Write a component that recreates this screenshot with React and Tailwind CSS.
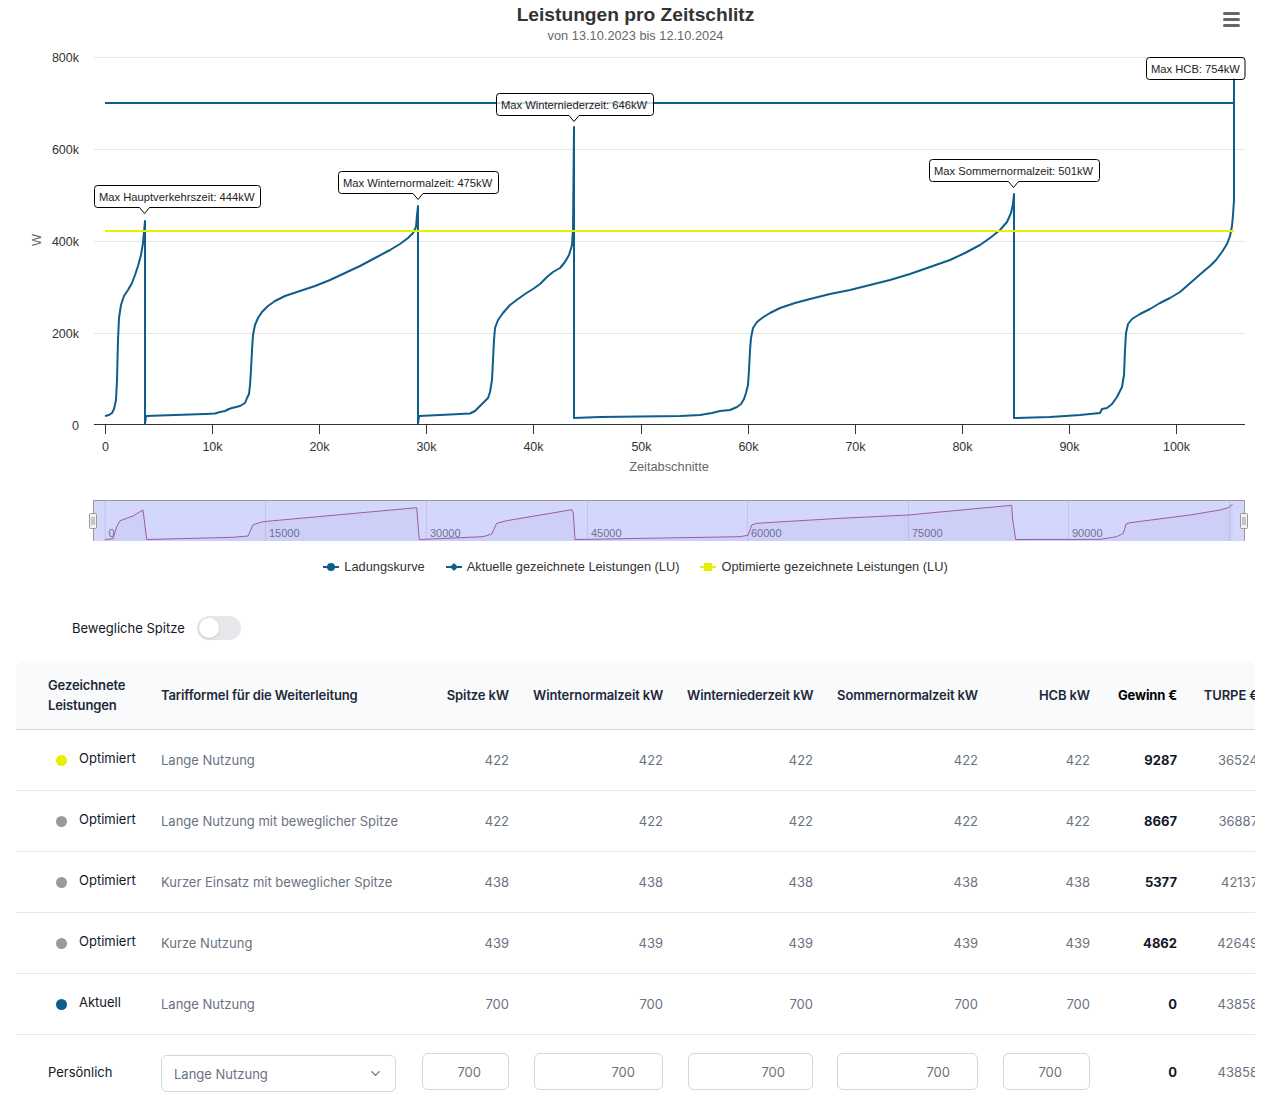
import React from "react";
import { ChevronDown } from "lucide-react";

const BLUE = "#0f5d8a";
const YELLOW = "#e8f000";
const GRAY = "#9a9a9a";

const pts = (arr) => arr.map((p) => p.join(",")).join(" ");

// Ladungskurve, page coordinates
const curve = [
  [105, 416], [109, 415], [112, 413], [114, 409], [116, 400], [117, 380], [118, 340], [119, 318], [121, 305], [124, 296], [128, 290], [132, 283], [135, 275], [138, 266], [141, 255], [143, 243], [144, 232], [145, 221],
  [145, 424], [146, 416], [160, 415.5], [175, 415], [190, 414.5], [205, 414], [215, 413.5], [220, 412], [225, 411], [229, 409], [232, 408], [240, 406], [245, 403], [247, 398], [249, 394], [250, 385], [251, 370], [252, 350], [253, 335], [255, 325], [258, 318], [262, 312], [268, 306], [275, 301], [285, 296], [300, 291], [315, 286], [330, 280], [345, 273], [360, 266], [375, 258], [390, 250], [400, 244], [408, 238], [413, 233], [416, 227], [417, 215], [418, 206],
  [418, 424], [419, 416], [440, 415], [460, 414], [470, 413.5], [475, 411], [480, 406], [484, 402], [488, 398], [490, 392], [492, 380], [493, 360], [494, 340], [495, 328], [498, 320], [503, 313], [510, 305], [518, 299], [525, 294], [533, 289], [540, 284], [547, 277], [553, 272], [560, 268], [565, 262], [569, 255], [572, 245], [573, 230], [574, 127],
  [574, 418], [600, 417], [640, 416.5], [680, 416], [700, 415], [712, 413], [720, 411], [730, 410], [737, 407], [741, 404], [744, 399], [746, 393], [748, 385], [749, 370], [750, 350], [751, 338], [753, 328], [757, 322], [762, 318], [770, 313], [780, 308], [795, 303], [810, 299], [830, 294], [850, 290], [870, 285], [890, 280], [910, 274], [930, 267], [950, 260], [965, 253], [980, 245], [990, 238], [1000, 230], [1007, 222], [1011, 213], [1013, 204], [1014, 194],
  [1014, 418], [1050, 417], [1080, 415], [1100, 413], [1102, 409], [1107, 408], [1112, 404], [1117, 397], [1122, 387], [1124, 375], [1125, 350], [1126, 333], [1128, 324], [1132, 319], [1140, 314], [1150, 309], [1160, 303], [1170, 298], [1180, 292], [1188, 285], [1196, 278], [1204, 271], [1210, 266], [1216, 260], [1222, 252], [1227, 244], [1230, 236], [1232, 226], [1233, 215], [1234, 200], [1234, 78],
];

// navigator series
const nav = [
  [105, 539.5], [113, 538.7], [116.7, 526.7], [120, 520.7], [133, 516], [143, 510], [146.7, 539.5],
  [233, 537.3], [248, 536], [253, 524.7], [263, 521.7], [416.7, 507.7], [419.3, 539.5],
  [483, 536.7], [491.7, 534], [496.7, 523.3], [506.7, 520.7], [570, 510], [571.7, 509.3], [573.3, 513], [575, 539.5],
  [740, 536.7], [748, 535.3], [751.7, 525], [756.7, 523.3], [840, 518.3], [908, 515], [1011.7, 505.3], [1012.7, 520], [1015.7, 539.5],
  [1100, 539.3], [1116.7, 536.7], [1123.3, 533.3], [1126, 524], [1130, 522.7], [1190, 515], [1220, 510], [1228.3, 507.7], [1232.7, 504],
];

const callout = (x1, y1, x2, y2, tx) => {
  const r = 3;
  if (tx == null) {
    return `M${x1 + r} ${y1} H${x2 - r} Q${x2} ${y1} ${x2} ${y1 + r} V${y2 - r} Q${x2} ${y2} ${x2 - r} ${y2} H${x1 + r} Q${x1} ${y2} ${x1} ${y2 - r} V${y1 + r} Q${x1} ${y1} ${x1 + r} ${y1} Z`;
  }
  return `M${x1 + r} ${y1} H${x2 - r} Q${x2} ${y1} ${x2} ${y1 + r} V${y2 - r} Q${x2} ${y2} ${x2 - r} ${y2} H${tx + 5} L${tx} ${y2 + 6} L${tx - 5} ${y2} H${x1 + r} Q${x1} ${y2} ${x1} ${y2 - r} V${y1 + r} Q${x1} ${y1} ${x1 + r} ${y1} Z`;
};

const annotations = [
  { x1: 94.5, y1: 185.5, x2: 260.5, y2: 207.5, tx: 144.5, text: "Max Hauptverkehrszeit: 444kW" },
  { x1: 338.5, y1: 171.5, x2: 498.5, y2: 193.5, tx: 418, text: "Max Winternormalzeit: 475kW" },
  { x1: 496.5, y1: 93.5, x2: 653.5, y2: 115.5, tx: 574, text: "Max Winterniederzeit: 646kW" },
  { x1: 929.5, y1: 159.5, x2: 1099.5, y2: 181.5, tx: 1013.5, text: "Max Sommernormalzeit: 501kW" },
  { x1: 1146.5, y1: 57.5, x2: 1245, y2: 79.5, tx: null, text: "Max HCB: 754kW" },
];

const yLabels = [
  { y: 57, t: "800k" },
  { y: 149, t: "600k" },
  { y: 241, t: "400k" },
  { y: 333, t: "200k" },
  { y: 425, t: "0" },
];

const xLabels = ["0", "10k", "20k", "30k", "40k", "50k", "60k", "70k", "80k", "90k", "100k"];
const navGrid = [105, 265.5, 426.5, 587.5, 747.5, 908.5, 1068.5, 1229.5];
const navLabels = ["0", "15000", "30000", "45000", "60000", "75000", "90000"];

function Chart() {
  return (
    <svg width="1271" height="506" viewBox="0 44 1271 506" className="block" style={{ fontFamily: "'Liberation Sans', Arial, sans-serif" }}>
      {/* grid */}
      {[57.5, 149.5, 241.5, 333.5].map((y) => (
        <line key={y} x1="94" x2="1245" y1={y} y2={y} stroke="#e6e6e6" strokeWidth="1" />
      ))}
      {yLabels.map((l) => (
        <text key={l.t} x="79" y={l.y + 4.5} textAnchor="end" fontSize="12.5" fill="#333">
          {l.t}
        </text>
      ))}
      <text x="41" y="240" fontSize="12.8" fill="#666" textAnchor="middle" transform="rotate(-90 41 240)">
        W
      </text>

      {/* x axis */}
      <line x1="94" x2="1245" y1="424.5" y2="424.5" stroke="#333" strokeWidth="1" />
      {xLabels.map((t, i) => {
        const x = Math.round(105 + i * 107.1) + 0.5;
        return (
          <g key={t}>
            <line x1={x} x2={x} y1="425" y2="434" stroke="#333" strokeWidth="1" />
            <text x={x} y="450.5" textAnchor="middle" fontSize="12.5" fill="#333">
              {t}
            </text>
          </g>
        );
      })}
      <text x="669" y="471" textAnchor="middle" fontSize="12.8" fill="#666">
        Zeitabschnitte
      </text>

      {/* series */}
      <polyline points={pts(curve)} fill="none" stroke={BLUE} strokeWidth="2" strokeLinejoin="round" />
      <line x1="105" x2="1234" y1="103" y2="103" stroke={BLUE} strokeWidth="2" />
      <line x1="105" x2="1234" y1="231" y2="231" stroke={YELLOW} strokeWidth="2" />

      {/* annotations */}
      {annotations.map((a) => (
        <g key={a.text}>
          <path d={callout(a.x1, a.y1, a.x2, a.y2, a.tx)} fill="rgba(255,255,255,0.75)" stroke="#000" strokeWidth="1" />
          <text x={a.x1 + 4.5} y={a.y1 + 15} fontSize="11.2" fill="#222">
            {a.text}
          </text>
        </g>
      ))}

      {/* navigator */}
      <rect x="93" y="500" width="1152" height="41" fill="#d3d7fb" />
      {navGrid.map((x) => (
        <line key={x} x1={x} x2={x} y1="500" y2="541" stroke="#c0c4ee" strokeWidth="1" />
      ))}
      {navLabels.map((t, i) => (
        <text key={t} x={navGrid[i] + 3.5} y="537" fontSize="11" fill="#6f7296">
          {t}
        </text>
      ))}
      <polygon points={pts([...nav, [1232.7, 541], [105, 541]])} fill="rgba(120,90,170,0.06)" />
      <polyline points={pts(nav)} fill="none" stroke="#a05aa8" strokeWidth="1" />
      <path d="M93.5 541 V500.5 H1244.5 V541" fill="none" stroke="#999" strokeWidth="1" />
      {[89.5, 1240.5].map((x) => (
        <g key={x}>
          <rect x={x} y="513.5" width="7" height="15" rx="1" fill="#f2f2f2" stroke="#999" strokeWidth="1" />
          <line x1={x + 2.5} x2={x + 2.5} y1="517" y2="525" stroke="#999" strokeWidth="1" />
          <line x1={x + 4.5} x2={x + 4.5} y1="517" y2="525" stroke="#999" strokeWidth="1" />
        </g>
      ))}
    </svg>
  );
}

function LegendItem({ type, color, label }) {
  return (
    <div className="flex items-center">
      <svg width="16" height="12" className="block">
        <line x1="0" x2="16" y1="6" y2="6" stroke={color} strokeWidth="2" />
        {type === "circle" && <circle cx="8" cy="6" r="4" fill={color} />}
        {type === "diamond" && <path d="M8 2 L12 6 L8 10 L4 6 Z" fill={color} />}
        {type === "square" && <rect x="4" y="2" width="8" height="8" fill={color} />}
      </svg>
      <span className="ml-[5px]">{label}</span>
    </div>
  );
}

const rows = [
  { dot: YELLOW, name: "Optimiert", tarif: "Lange Nutzung", v: 422, gewinn: 9287, turpe: 36524 },
  { dot: GRAY, name: "Optimiert", tarif: "Lange Nutzung mit beweglicher Spitze", v: 422, gewinn: 8667, turpe: 36887 },
  { dot: GRAY, name: "Optimiert", tarif: "Kurzer Einsatz mit beweglicher Spitze", v: 438, gewinn: 5377, turpe: 42137 },
  { dot: GRAY, name: "Optimiert", tarif: "Kurze Nutzung", v: 439, gewinn: 4862, turpe: 42649 },
  { dot: BLUE, name: "Aktuell", tarif: "Lange Nutzung", v: 700, gewinn: 0, turpe: 43858 },
];

const inputWidths = ["w-[87px]", "w-[129px]", "w-[125px]", "w-[141px]", "w-[87px]"];

export default function App() {
  return (
    <div className="w-[1271px] bg-white font-['Inter',sans-serif]">
      {/* Chart */}
      <div className="relative font-['Liberation_Sans',Arial,sans-serif]">
        <div className="pt-[3px] text-center text-[19.2px] leading-[24px] font-bold text-[#333]">Leistungen pro Zeitschlitz</div>
        <div className="mt-[1px] text-center text-[12.8px] leading-[16px] text-[#666]">von 13.10.2023 bis 12.10.2024</div>
        <button className="absolute right-[31px] top-[12px] flex flex-col gap-[3px]">
          <span className="block h-[3px] w-[17px] rounded-sm bg-[#666]" />
          <span className="block h-[3px] w-[17px] rounded-sm bg-[#666]" />
          <span className="block h-[3px] w-[17px] rounded-sm bg-[#666]" />
        </button>
        <Chart />
        <div className="mt-[9px] flex justify-center gap-[21px] text-[12.8px] leading-[16px] text-[#333]">
          <LegendItem type="circle" color={BLUE} label="Ladungskurve" />
          <LegendItem type="diamond" color={BLUE} label="Aktuelle gezeichnete Leistungen (LU)" />
          <LegendItem type="square" color={YELLOW} label="Optimierte gezeichnete Leistungen (LU)" />
        </div>
      </div>

      {/* Toggle */}
      <div className="mt-[41px] flex h-[24px] items-center gap-3 pl-[72px] text-[13px] text-gray-900">
        <span className="relative top-[1px]">Bewegliche Spitze</span>
        <div className="relative h-[24px] w-[44px] rounded-full bg-gray-200">
          <div className="absolute left-[2px] top-[2px] h-[20px] w-[20px] rounded-full bg-white shadow" />
        </div>
      </div>

      {/* Table */}
      <div className="ml-[16px] mt-[21px] w-[1239px] overflow-hidden rounded-t-lg">
        <table className="w-[1354px] table-fixed border-collapse text-[13px] leading-[20px]">
          <colgroup>
            <col className="w-[133px]" />
            <col className="w-[260px]" />
            <col className="w-[112px]" />
            <col className="w-[154px]" />
            <col className="w-[150px]" />
            <col className="w-[165px]" />
            <col className="w-[112px]" />
            <col className="w-[87px]" />
            <col className="w-[81px]" />
            <col className="w-[100px]" />
          </colgroup>
          <thead className="bg-gray-50">
            <tr className="border-b border-gray-300 tracking-[-0.12px] text-gray-800">
              <th className="py-[14px] pl-8 pr-3 text-left align-middle font-semibold">Gezeichnete Leistungen</th>
              <th className="whitespace-nowrap px-3 text-left align-middle font-semibold">Tarifformel für die Weiterleitung</th>
              <th className="whitespace-nowrap px-3 text-right align-middle font-semibold">Spitze kW</th>
              <th className="whitespace-nowrap px-3 text-right align-middle font-semibold">Winternormalzeit kW</th>
              <th className="whitespace-nowrap px-3 text-right align-middle font-semibold">Winterniederzeit kW</th>
              <th className="whitespace-nowrap px-3 text-right align-middle font-semibold">Sommernormalzeit kW</th>
              <th className="whitespace-nowrap px-3 text-right align-middle font-semibold">HCB kW</th>
              <th className="whitespace-nowrap px-3 text-right align-middle font-bold text-black">Gewinn €</th>
              <th className="whitespace-nowrap px-3 text-right align-middle font-semibold">TURPE €</th>
              <th className="px-3" />
            </tr>
          </thead>
          <tbody>
            {rows.map((r, i) => (
              <tr key={i} className="h-[61px] border-b border-gray-200">
                <td className="py-5 pl-8 pr-3">
                  <div className="flex h-[20px] items-center gap-3 pl-2">
                    <span className="h-[11px] w-[11px] shrink-0 rounded-full" style={{ backgroundColor: r.dot }} />
                    <span className="relative -top-[2px] text-gray-900">{r.name}</span>
                  </div>
                </td>
                <td className="whitespace-nowrap px-3 text-gray-500">{r.tarif}</td>
                {[0, 1, 2, 3, 4].map((k) => (
                  <td key={k} className="px-3 text-right text-gray-500">
                    {r.v}
                  </td>
                ))}
                <td className="px-3 text-right font-bold text-gray-900">{r.gewinn}</td>
                <td className="px-3 text-right text-gray-500">{r.turpe}</td>
                <td />
              </tr>
            ))}
            <tr>
              <td className="pb-3 pl-8 pr-3 pt-[18px] align-top">
                <div className="flex h-[37px] items-center text-gray-900">Persönlich</div>
              </td>
              <td className="px-3 pt-[18px] align-top">
                <div className="mt-[2px] flex h-[37px] w-[235px] items-center justify-between rounded-md border border-gray-300 pl-3 pr-[12px] text-gray-500">
                  <span>Lange Nutzung</span>
                  <ChevronDown size={15} strokeWidth={2} className="text-gray-500" />
                </div>
              </td>
              {inputWidths.map((w, k) => (
                <td key={k} className="px-3 pt-[18px] align-top">
                  <div className="flex justify-end">
                    <input
                      readOnly
                      value="700"
                      className={`${w} h-[37px] rounded-md border border-gray-300 bg-white pr-[27px] text-right text-[13px] text-gray-500 outline-none`}
                    />
                  </div>
                </td>
              ))}
              <td className="px-3 pt-[18px] align-top">
                <div className="flex h-[37px] items-center justify-end font-bold text-gray-900">0</div>
              </td>
              <td className="px-3 pt-[18px] align-top">
                <div className="flex h-[37px] items-center justify-end text-gray-500">43858</div>
              </td>
              <td />
            </tr>
          </tbody>
        </table>
      </div>
    </div>
  );
}
